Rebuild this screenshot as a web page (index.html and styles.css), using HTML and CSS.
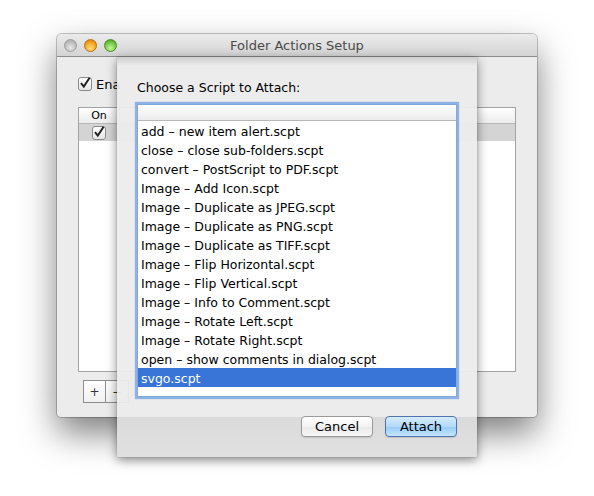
FILE: index.html
```html
<!DOCTYPE html>
<html>
<head>
<meta charset="utf-8">
<link rel="stylesheet" href="styles.css">
</head>
<body>
<div class="window">
  <div class="titlebar">
    <div class="lights">
      <span class="light gray"></span>
      <span class="light orange"></span>
      <span class="light green"></span>
    </div>
    <div class="title">Folder Actions Setup</div>
  </div>
  <div class="content">
    <div class="enable">
      <span class="check"><svg viewBox="0 0 14 14" width="14" height="14"><path d="M3 7.2 L5.8 10.6 L11.6 1.8" fill="none" stroke="#222" stroke-width="2"/></svg></span>
      <span class="enable-label">Ena</span>
    </div>
    <div class="table">
      <div class="thead">
        <div class="col-on">On</div>
        <div class="col-name"></div>
      </div>
      <div class="trow selected">
        <div class="col-on"><span class="check small"><svg viewBox="0 0 14 14" width="14" height="14"><path d="M3 7.2 L5.8 10.6 L11.6 1.8" fill="none" stroke="#222" stroke-width="2"/></svg></span></div>
        <div class="col-name"></div>
      </div>
    </div>
    <div class="pm">
      <span class="pm-btn">+</span><span class="pm-btn">−</span>
    </div>
  </div>

  <div class="sheet">
    <div class="sheet-label">Choose a Script to Attach:</div>
    <div class="listbox">
      <div class="list-head"></div>
      <div class="item">add – new item alert.scpt</div>
      <div class="item">close – close sub-folders.scpt</div>
      <div class="item">convert – PostScript to PDF.scpt</div>
      <div class="item">Image – Add Icon.scpt</div>
      <div class="item">Image – Duplicate as JPEG.scpt</div>
      <div class="item">Image – Duplicate as PNG.scpt</div>
      <div class="item">Image – Duplicate as TIFF.scpt</div>
      <div class="item">Image – Flip Horizontal.scpt</div>
      <div class="item">Image – Flip Vertical.scpt</div>
      <div class="item">Image – Info to Comment.scpt</div>
      <div class="item">Image – Rotate Left.scpt</div>
      <div class="item">Image – Rotate Right.scpt</div>
      <div class="item">open – show comments in dialog.scpt</div>
      <div class="item sel">svgo.scpt</div>
    </div>
    <div class="buttons">
      <span class="btn">Cancel</span>
      <span class="btn default">Attach</span>
    </div>
  </div>
</div>
</body>
</html>
```
FILE: styles.css
```css
html, body {
  margin: 0;
  padding: 0;
  background: #ffffff;
  font-family: "DejaVu Sans", "Liberation Sans", sans-serif;
  font-size: 12px;
  color: #000;
}
body {
  padding: 34px 0 0 57px;
  height: 496px;
  box-sizing: border-box;
  overflow: hidden;
}
.window {
  position: relative;
  width: 480px;
  height: 383px;
  background: #ececec;
  border-radius: 5px 5px 4px 4px;
  box-shadow: 0 0 0 1px rgba(0,0,0,0.22), 0 16px 34px rgba(0,0,0,0.5);
}
.titlebar {
  height: 22px;
  border-bottom: 1px solid #8c8c8c;
  border-radius: 5px 5px 0 0;
  background: linear-gradient(#ebebeb, #d4d4d4);
  display: flex;
  align-items: center;
  position: relative;
}
.lights {
  display: flex;
  gap: 7px;
  padding-left: 7px;
}
.light {
  width: 13px;
  height: 13px;
  border-radius: 50%;
  box-sizing: border-box;
}
.light.gray {
  background: radial-gradient(circle at 50% 70%, #e8e8e8, #b5b5b5 70%);
  border: 1px solid #9d9d9d;
}
.light.orange {
  background: radial-gradient(circle at 50% 75%, #ffe07a, #f1a11d 60%, #c9760b);
  border: 1px solid #b6720f;
}
.light.green {
  background: radial-gradient(circle at 50% 75%, #c6f59a, #6ec641 60%, #3f901d);
  border: 1px solid #4c8f2b;
}
.title {
  position: absolute;
  left: 0;
  right: 0;
  text-align: center;
  font-size: 13px;
  color: #4a4a4a;
  top: 4px;
}
.content {
  padding: 20px 21px 0 21px;
}
.enable {
  display: flex;
  align-items: center;
  gap: 4px;
  height: 14px;
}
.check {
  width: 14px;
  height: 14px;
  box-sizing: border-box;
  border: 1px solid #8a8a8a;
  border-radius: 3px;
  background: linear-gradient(#ffffff, #e6e6e6);
  display: inline-flex;
  align-items: center;
  justify-content: center;
  overflow: visible;
}
.check svg { flex: none; margin-top: -2px; }
.enable-label { font-size: 13px; }
.table {
  margin-top: 16px;
  width: 438px;
  height: 265px;
  box-sizing: border-box;
  border: 1px solid #a3a3a3;
  background: #fff;
}
.thead {
  height: 15px;
  border-bottom: 1px solid #b8b8b8;
  background: linear-gradient(#ffffff, #ececec);
  display: flex;
  font-size: 11px;
  line-height: 15px;
}
.thead .col-on { border-right: 1px solid #c4c4c4; }
.col-on {
  width: 40px;
  text-align: center;
  display: flex;
  justify-content: center;
  align-items: center;
}
.col-name { padding-left: 6px; flex: 1; }
.trow {
  height: 17px;
  display: flex;
  align-items: center;
  font-size: 12px;
}
.trow.selected { background: #d4d4d4; }
.pm {
  margin-top: 8px;
  margin-left: 5px;
  display: flex;
}
.pm-btn {
  width: 23px;
  height: 23px;
  box-sizing: border-box;
  border: 1px solid #8e8e8e;
  background: linear-gradient(#ffffff, #f1f1f1);
  display: inline-flex;
  align-items: center;
  justify-content: center;
  font-size: 12px;
  color: #333;
}
.pm-btn + .pm-btn { border-left: none; }

.sheet {
  position: absolute;
  left: 60px;
  top: 23px;
  width: 360px;
  height: 400px;
  box-sizing: border-box;
  padding: 23px 20px 20px 20px;
  background:
    linear-gradient(rgba(0,0,0,0.13), rgba(0,0,0,0) 9px),
    linear-gradient(rgba(0,0,0,0) 360px, rgba(0,0,0,0.055) 360px),
    rgba(236,236,236,0.94);
  box-shadow: 0 3px 10px rgba(0,0,0,0.45), 0 0 1px rgba(0,0,0,0.4);
  display: flex;
  flex-direction: column;
}
.sheet-label {
  font-size: 12.5px;
  line-height: 16px;
}
.listbox {
  margin-top: 8px;
  width: 320px;
  height: 293px;
  box-sizing: border-box;
  border: 1px solid #7fa9dc;
  box-shadow: 0 0 1px 2px rgba(110,160,225,0.75);
  background: #fff;
}
.list-head {
  height: 15px;
  border-bottom: 1px solid #b8b8b8;
  background: linear-gradient(#ffffff, #ebebeb);
}
.item {
  height: 19px;
  box-sizing: border-box;
  padding-top: 2px;
  line-height: 17px;
  padding-left: 3px;
  font-size: 12.5px;
  white-space: nowrap;
}
.item.sel {
  background: #3875d7;
  color: #fff;
}
.buttons {
  margin-top: auto;
  display: flex;
  justify-content: flex-end;
  gap: 12px;
}
.btn {
  width: 72px;
  height: 21px;
  box-sizing: border-box;
  border: 1px solid #9a9a9a;
  border-radius: 4px;
  background: linear-gradient(#ffffff, #f3f3f3 50%, #e9e9e9 51%, #f7f7f7);
  display: inline-flex;
  align-items: center;
  justify-content: center;
  font-size: 13px;
  box-shadow: 0 1px 1px rgba(0,0,0,0.12);
}
.btn.default {
  border-color: #4f74ad;
  background: linear-gradient(#d5ecfd, #b3dafa 50%, #94cbf7 51%, #c5e6fd);
}
```
